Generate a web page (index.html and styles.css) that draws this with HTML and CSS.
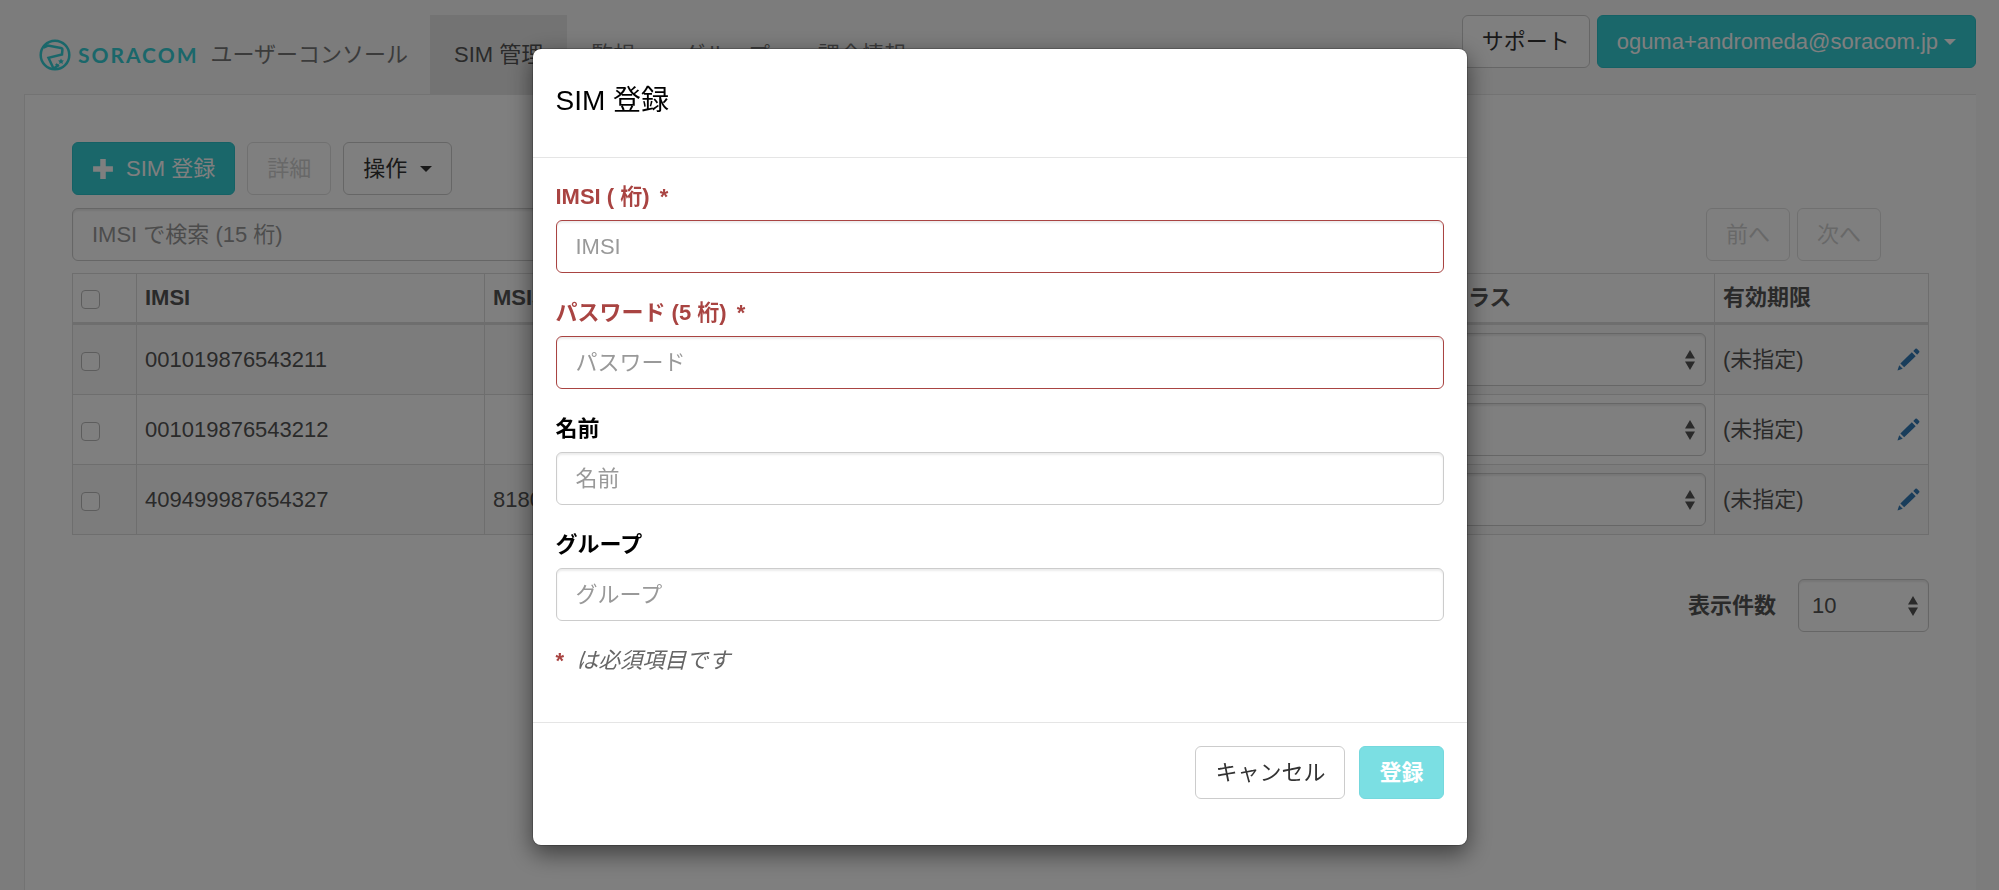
FILE: index.html
```html
<!DOCTYPE html>
<html lang="ja">
<head>
    <meta charset="UTF-8">
    <meta name="viewport" content="width=device-width, initial-scale=1.0">
    <title>SORACOM ユーザーコンソール</title>
    <link rel="stylesheet" href="styles.css">
</head>
<body>
    <svg class="sprite" aria-hidden="true">
        <symbol id="icon-sort" viewBox="0 0 10 20">
            <path d="M5 0l5 8.500H0zM5 20l5-8.500H0z"/>
        </symbol>
        <symbol id="icon-pencil" viewBox="0 0 24 24">
            <path d="M0.500 23.500l1.800-5.500 3.700 3.700zM3.500 16.200L15.500 4.500l4 4L7.500 20.200zM17 3L19.200 0.900q.8-.8 1.600 0l2.300 2.300q.8.8 0 1.600L21 7z"/>
        </symbol>
    </svg>

    <header class="header">
        <a class="brand" href="#">
            <svg class="brand-mark" viewBox="0 0 32 32" aria-hidden="true">
                <circle cx="16" cy="16" r="14.300"/>
                <path d="M4.500 8.500L9 6.500 22 9q1.500.3 1.400 1.800L23 15.500 9.500 18.800 14.500 29.500M14.500 29.500L20 26"/>
                <path class="star" d="M22 19.500l.9 1.800 2 .3-1.400 1.400.3 2-1.800-.9-1.800.9.3-2-1.400-1.400 2-.3zM17.800 23.800l.6 1.200 1.300.2-.9.900.2 1.300-1.200-.6-1.200.6.2-1.300-.9-.9 1.300-.2z"/>
            </svg>
            <span class="brand-name">SORACOM</span>
            <span>ユーザーコンソール</span>
        </a>
        <nav class="tabs">
            <a class="tab active" href="#">SIM 管理</a>
            <a class="tab" href="#">監視</a>
            <a class="tab" href="#">グループ</a>
            <a class="tab" href="#">課金情報</a>
        </nav>
        <div class="header-right">
            <button class="btn" type="button">サポート</button>
            <button class="btn btn-primary" type="button">oguma+andromeda@soracom.jp<span class="caret caret-near"></span></button>
        </div>
    </header>

    <main class="panel">
        <div class="toolbar">
            <button class="btn btn-primary" type="button">
                <svg class="icon-plus" viewBox="0 0 20 20" aria-hidden="true"><path d="M7.500 1h5v6.500H19v5h-6.500V19h-5v-6.500H1v-5h6.500z"/></svg>SIM 登録
            </button>
            <button class="btn" type="button" disabled>詳細</button>
            <button class="btn" type="button">操作<span class="caret"></span></button>
        </div>
        <div class="search-row">
            <input class="form-control search" type="text" placeholder="IMSI で検索 (15 桁)" aria-label="IMSI で検索">
            <div class="pager">
                <button class="btn" type="button" disabled>前へ</button>
                <button class="btn" type="button" disabled>次へ</button>
            </div>
        </div>

        <table class="sims">
            <thead>
                <tr>
                    <th class="col-check"><input type="checkbox" aria-label="すべて選択"></th>
                    <th class="col-imsi">IMSI</th>
                    <th>MSISDN</th>
                    <th>名前</th>
                    <th>グループ</th>
                    <th>状態</th>
                    <th class="col-speed">速度クラス</th>
                    <th class="col-expiry">有効期限</th>
                </tr>
            </thead>
            <tbody>
                <tr>
                    <td><input type="checkbox" aria-label="001019876543211"></td>
                    <td>001019876543211</td>
                    <td></td>
                    <td></td>
                    <td></td>
                    <td></td>
                    <td><div class="select"><select class="form-control" aria-label="速度クラス"><option></option></select><svg><use href="#icon-sort"/></svg></div></td>
                    <td><div class="expiry">(未指定)<a href="#" aria-label="編集"><svg><use href="#icon-pencil"/></svg></a></div></td>
                </tr>
                <tr>
                    <td><input type="checkbox" aria-label="001019876543212"></td>
                    <td>001019876543212</td>
                    <td></td>
                    <td></td>
                    <td></td>
                    <td></td>
                    <td><div class="select"><select class="form-control" aria-label="速度クラス"><option></option></select><svg><use href="#icon-sort"/></svg></div></td>
                    <td><div class="expiry">(未指定)<a href="#" aria-label="編集"><svg><use href="#icon-pencil"/></svg></a></div></td>
                </tr>
                <tr>
                    <td><input type="checkbox" aria-label="409499987654327"></td>
                    <td>409499987654327</td>
                    <td>8180</td>
                    <td></td>
                    <td></td>
                    <td></td>
                    <td><div class="select"><select class="form-control" aria-label="速度クラス"><option></option></select><svg><use href="#icon-sort"/></svg></div></td>
                    <td><div class="expiry">(未指定)<a href="#" aria-label="編集"><svg><use href="#icon-pencil"/></svg></a></div></td>
                </tr>
            </tbody>
        </table>

        <div class="page-size">
            <label for="pageSize">表示件数</label>
            <div class="select">
                <select class="form-control" id="pageSize"><option>10</option></select>
                <svg><use href="#icon-sort"/></svg>
            </div>
        </div>
    </main>

    <div class="backdrop">
        <div class="modal" role="dialog" aria-modal="true" aria-labelledby="modalTitle">
            <div class="modal-header">
                <h4 id="modalTitle">SIM 登録</h4>
            </div>
            <form id="simForm" class="modal-body">
                <div class="form-group has-error">
                    <label for="imsi">IMSI ( 桁) <span class="required">*</span></label>
                    <input class="form-control" type="text" id="imsi" placeholder="IMSI">
                </div>
                <div class="form-group has-error">
                    <label for="passcode">パスワード (5 桁) <span class="required">*</span></label>
                    <input class="form-control" type="text" id="passcode" placeholder="パスワード">
                </div>
                <div class="form-group">
                    <label for="name">名前</label>
                    <input class="form-control" type="text" id="name" placeholder="名前">
                </div>
                <div class="form-group">
                    <label for="group">グループ</label>
                    <input class="form-control" type="text" id="group" placeholder="グループ">
                </div>
                <p class="note"><span>*</span> は必須項目です</p>
            </form>
            <div class="modal-footer">
                <button class="btn" type="button">キャンセル</button>
                <button class="btn btn-primary" type="submit" form="simForm" disabled>登録</button>
            </div>
        </div>
    </div>
</body>
</html>
```
FILE: styles.css
```css
* {
    box-sizing: border-box;
}
body {
    display: flex;
    flex-direction: column;
    min-height: 100vh;
    margin: 0;
    padding: 15px 23px 0 24px;
    background: #f8f8f8;
    color: #555;
    font-family: "Liberation Sans", "Noto Sans CJK JP", sans-serif;
    font-size: 22px;
    line-height: 31px;
}
a {
    text-decoration: none;
}
.sprite {
    display: none;
}

/* header */
.header {
    display: flex;
    align-items: flex-start;
    border-bottom: 1px solid #e7e7e7;
}
.brand,
.tab {
    display: flex;
    align-items: center;
    height: 79px;
    color: #777;
    white-space: nowrap;
}
.brand {
    padding: 0 22px 0 15px;
}
.brand-mark {
    width: 32px;
    height: 32px;
    margin-right: 7px;
    fill: none;
    stroke: #35ced5;
    stroke-width: 2.5;
}
.brand-mark .star {
    fill: #35ced5;
    stroke: none;
}
.brand-name {
    margin-right: 12px;
    color: #35ced5;
    font-family: Lato, sans-serif;
    font-size: 21px;
    font-weight: bold;
    letter-spacing: 2px;
}
.tabs {
    display: flex;
}
.tab {
    padding: 0 24px;
}
.tab.active {
    background: #e7e7e7;
    color: #555;
}
.header-right {
    display: flex;
    gap: 7px;
    margin-left: auto;
}

/* buttons and fields */
.btn {
    display: inline-flex;
    align-items: center;
    height: 53px;
    padding: 0 19px;
    border: 1px solid #ccc;
    border-radius: 6px;
    background: #fff;
    color: #333;
    font: inherit;
    white-space: nowrap;
    cursor: pointer;
}
.btn-primary {
    border-color: #2bc3cb;
    background: #35ced5;
    color: #fff;
}
.btn:disabled {
    opacity: 0.65;
    cursor: not-allowed;
}
.caret {
    margin-left: 13px;
    border-top: 6px solid;
    border-right: 6px solid transparent;
    border-left: 6px solid transparent;
}
.caret-near {
    margin-left: 6px;
}
.icon-plus {
    width: 22px;
    height: 22px;
    margin-right: 12px;
    fill: currentColor;
}
.form-control {
    display: block;
    width: 100%;
    height: 53px;
    padding: 0 19px;
    border: 1px solid #ccc;
    border-radius: 6px;
    background: #fff;
    box-shadow: inset 0 2px 2px rgba(0, 0, 0, 0.075);
    color: #555;
    font: inherit;
    appearance: none;
}
.form-control::placeholder {
    color: #999;
    opacity: 1;
}
.select {
    position: relative;
}
.select .form-control {
    padding: 0 13px;
}
.select svg {
    position: absolute;
    top: 17px;
    right: 11px;
    width: 10px;
    height: 20px;
    fill: #555;
    pointer-events: none;
}
input[type="checkbox"] {
    display: block;
    width: 19px;
    height: 19px;
    margin: 3px 0 0;
    border: 1px solid #bbb;
    border-radius: 4px;
    background: #fff;
    appearance: none;
}

/* SIM list */
.panel {
    flex: 1;
    padding: 47px 47px 0;
    border-left: 1px solid #e7e7e7;
    background: #fff;
}
.toolbar {
    display: flex;
    gap: 12px;
}
.search-row {
    display: flex;
    justify-content: space-between;
    margin: 13px 48px 12px 0;
}
.search {
    width: 620px;
}
.pager {
    display: flex;
    gap: 7px;
}
.pager .btn,
.toolbar .btn:disabled {
    border-color: #bbb;
    color: #999;
    opacity: 0.45;
}
.sims {
    width: 100%;
    border-collapse: collapse;
    table-layout: fixed;
}
.sims th,
.sims td {
    padding: 8px;
    border: 1px solid #ddd;
    text-align: left;
}
.sims th {
    padding-bottom: 9px;
    border-bottom-width: 3px;
}
.sims tbody tr:nth-child(odd) {
    background: #f9f9f9;
}
.col-check {
    width: 64px;
}
.col-imsi {
    width: 348px;
}
.col-speed {
    width: 321px;
}
.col-expiry {
    width: 214px;
}
.expiry {
    display: flex;
    align-items: center;
    justify-content: space-between;
}
.expiry svg {
    display: block;
    width: 23px;
    height: 23px;
    fill: #337ab7;
}
.page-size {
    display: flex;
    align-items: center;
    justify-content: flex-end;
    gap: 22px;
    margin-top: 44px;
    font-weight: bold;
}
.page-size .select {
    width: 131px;
    font-weight: normal;
}

/* modal */
.backdrop {
    position: fixed;
    inset: 0;
    padding: 48px 24px;
    overflow: auto;
    background: rgba(0, 0, 0, 0.5);
}
.modal {
    max-width: 936px;
    margin: 0 auto;
    border: 1px solid rgba(0, 0, 0, 0.2);
    border-radius: 9px;
    background: #fff;
    background-clip: padding-box;
    box-shadow: 0 8px 23px rgba(0, 0, 0, 0.5);
    color: #000;
}
.modal-header {
    padding: 36px 23px 41px;
    border-bottom: 1px solid #e5e5e5;
}
.modal-header h4 {
    margin: 0;
    font-size: 28px;
    font-weight: normal;
}
.modal-body {
    padding: 23px;
}
.form-group {
    margin-bottom: 24px;
}
.form-group label {
    display: block;
    margin-bottom: 8px;
    font-weight: bold;
}
.required {
    margin-left: 4px;
}
.has-error {
    color: #a94442;
}
.has-error .form-control {
    border-color: #a94442;
}
.note {
    margin: 0 0 23px;
    color: #666;
    font-style: italic;
}
.note span {
    margin-right: 6px;
    color: #a94442;
    font-style: normal;
    font-weight: bold;
}
.modal-footer {
    display: flex;
    justify-content: flex-end;
    gap: 14px;
    padding: 23px 23px 46px;
    border-top: 1px solid #e5e5e5;
}
.modal-footer .btn-primary {
    font-weight: bold;
}
```
